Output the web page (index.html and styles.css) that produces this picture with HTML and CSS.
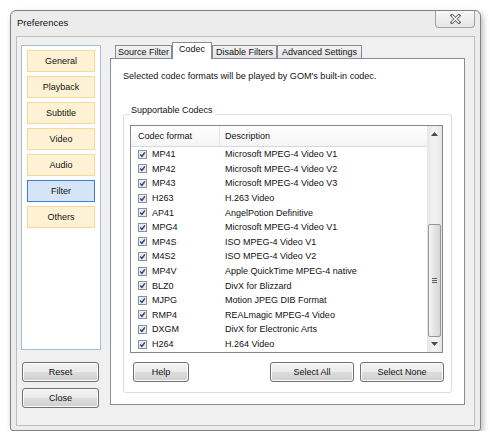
FILE: index.html
```html
<!DOCTYPE html>
<html lang="en">
<head>
    <meta charset="UTF-8">
    <title>Preferences</title>
    <link rel="stylesheet" href="styles.css">
</head>
<body>
    <!-- shared glyphs -->
    <svg class="defs" width="0" height="0">
        <symbol id="chk" viewBox="0 0 9 9">
            <rect x="0.5" y="0.5" width="8" height="8" fill="#f6f6f6" stroke="#8c8f94"/>
            <rect x="1.5" y="1.5" width="6" height="6" fill="#e4e6ea"/>
            <path d="M2.2 4.6 L3.9 6.4 L6.9 2.3" fill="none" stroke="#263f7e" stroke-width="1.4"/>
        </symbol>
    </svg>

    <div class="window">
        <div class="titlebar">
            <span class="title">Preferences</span>
            <div class="close-btn">
                <svg width="11" height="10" viewBox="0 0 11 10">
                    <path d="M2 1.5 L9 8.5 M9 1.5 L2 8.5" stroke="#6d6d6d" stroke-width="3.2" stroke-linecap="square"/>
                    <path d="M2 1.5 L9 8.5 M9 1.5 L2 8.5" stroke="#ffffff" stroke-width="1.3"/>
                </svg>
            </div>
        </div>

        <div class="client">
            <div class="sidebar">
                <div class="nav">
                    <div class="nav-item">General</div>
                    <div class="nav-item">Playback</div>
                    <div class="nav-item">Subtitle</div>
                    <div class="nav-item">Video</div>
                    <div class="nav-item">Audio</div>
                    <div class="nav-item active">Filter</div>
                    <div class="nav-item">Others</div>
                </div>
                <button class="btn side-btn first">Reset</button>
                <button class="btn side-btn">Close</button>
            </div>

            <div class="main">
                <div class="tabs">
                    <div class="tab tab-source">Source Filter</div>
                    <div class="tab tab-codec active">Codec</div>
                    <div class="tab tab-disable">Disable Filters</div>
                    <div class="tab tab-adv">Advanced Settings</div>
                </div>

                <div class="panel">
                    <div class="intro">Selected codec formats will be played by GOM's built-in codec.</div>

                    <div class="group">
                        <span class="group-label">Supportable Codecs</span>

                        <div class="list">
                            <div class="list-body">
                                <div class="list-head">
                                    <span class="col-code">Codec format</span>
                                    <span class="col-desc">Description</span>
                                </div>
                                <div class="row"><span class="col-code"><svg class="chk"><use href="#chk"/></svg>MP41</span><span class="col-desc">Microsoft MPEG-4 Video V1</span></div>
                                <div class="row"><span class="col-code"><svg class="chk"><use href="#chk"/></svg>MP42</span><span class="col-desc">Microsoft MPEG-4 Video V2</span></div>
                                <div class="row"><span class="col-code"><svg class="chk"><use href="#chk"/></svg>MP43</span><span class="col-desc">Microsoft MPEG-4 Video V3</span></div>
                                <div class="row"><span class="col-code"><svg class="chk"><use href="#chk"/></svg>H263</span><span class="col-desc">H.263 Video</span></div>
                                <div class="row"><span class="col-code"><svg class="chk"><use href="#chk"/></svg>AP41</span><span class="col-desc">AngelPotion Definitive</span></div>
                                <div class="row"><span class="col-code"><svg class="chk"><use href="#chk"/></svg>MPG4</span><span class="col-desc">Microsoft MPEG-4 Video V1</span></div>
                                <div class="row"><span class="col-code"><svg class="chk"><use href="#chk"/></svg>MP4S</span><span class="col-desc">ISO MPEG-4 Video V1</span></div>
                                <div class="row"><span class="col-code"><svg class="chk"><use href="#chk"/></svg>M4S2</span><span class="col-desc">ISO MPEG-4 Video V2</span></div>
                                <div class="row"><span class="col-code"><svg class="chk"><use href="#chk"/></svg>MP4V</span><span class="col-desc">Apple QuickTime MPEG-4 native</span></div>
                                <div class="row"><span class="col-code"><svg class="chk"><use href="#chk"/></svg>BLZ0</span><span class="col-desc">DivX for Blizzard</span></div>
                                <div class="row"><span class="col-code"><svg class="chk"><use href="#chk"/></svg>MJPG</span><span class="col-desc">Motion JPEG DIB Format</span></div>
                                <div class="row"><span class="col-code"><svg class="chk"><use href="#chk"/></svg>RMP4</span><span class="col-desc">REALmagic MPEG-4 Video</span></div>
                                <div class="row"><span class="col-code"><svg class="chk"><use href="#chk"/></svg>DXGM</span><span class="col-desc">DivX for Electronic Arts</span></div>
                                <div class="row"><span class="col-code"><svg class="chk"><use href="#chk"/></svg>H264</span><span class="col-desc">H.264 Video</span></div>
                            </div>

                            <div class="scrollbar">
                                <div class="sb-arrow">
                                    <svg width="7" height="4" viewBox="0 0 7 4"><polygon points="3.5,0 7,4 0,4" fill="#4a4a4a"/></svg>
                                </div>
                                <div class="sb-track">
                                    <div class="sb-thumb">
                                        <span class="grip"></span>
                                        <span class="grip"></span>
                                        <span class="grip"></span>
                                    </div>
                                </div>
                                <div class="sb-arrow">
                                    <svg width="7" height="4" viewBox="0 0 7 4"><polygon points="0,0 7,0 3.5,4" fill="#4a4a4a"/></svg>
                                </div>
                            </div>
                        </div>

                        <div class="actions">
                            <button class="btn btn-help">Help</button>
                            <button class="btn btn-sel">Select All</button>
                            <button class="btn btn-sel">Select None</button>
                        </div>
                    </div>
                </div>
            </div>
        </div>
    </div>
</body>
</html>
```

FILE: styles.css
```css
body, html {
    margin: 0;
    padding: 0;
    background: #ffffff;
    font-family: "Liberation Sans", Arial, sans-serif;
    font-size: 9px;
    color: #111111;
}
.defs {
    position: absolute;
    width: 0;
    height: 0;
}

/* window frame */
.window {
    margin: 10px 0 0 10px;
    width: 471px;
    height: 421px;
    box-sizing: border-box;
    border: 1px solid #828282;
    border-radius: 6px 6px 3px 3px;
    background: #ececec;
    box-shadow: 2px 3px 6px rgba(0, 0, 0, 0.28);
    padding: 0 5px 4px 5px;
    display: flex;
    flex-direction: column;
}
.titlebar {
    height: 25px;
    display: flex;
    align-items: flex-start;
    justify-content: space-between;
}
.title {
    padding: 6px 0 0 1px;
    font-size: 9.5px;
    line-height: 12px;
}
.close-btn {
    width: 40px;
    height: 17px;
    box-sizing: border-box;
    border: 1px solid #a3a3a3;
    border-top: none;
    border-radius: 0 0 4px 4px;
    background: linear-gradient(#f7f7f7, #e6e6e6);
    display: flex;
    align-items: center;
    justify-content: center;
}

.client {
    flex: 1;
    border: 1px solid #bdbdbd;
    background: #f0f0f0;
    padding: 5px 0 0 4px;
    display: flex;
}

/* left navigation */
.sidebar {
    width: 80px;
    margin-top: 3px;
    display: flex;
    flex-direction: column;
}
.nav {
    height: 305px;
    box-sizing: border-box;
    border: 1px solid #a9bbd4;
    background: #ffffff;
    padding: 4px 5px;
    display: flex;
    flex-direction: column;
    gap: 4px;
}
.nav-item {
    height: 22px;
    box-sizing: border-box;
    border: 1px solid #f6d99e;
    background: #fff1d4;
    text-align: center;
    line-height: 20px;
}
.nav-item.active {
    background: #d6e4f7;
    border-color: #3d7fd6;
}

/* push buttons */
.btn {
    height: 20px;
    box-sizing: border-box;
    border: 1px solid #717171;
    border-radius: 3px;
    background: linear-gradient(#f3f3f3 0%, #ebebeb 50%, #dddddd 51%, #cfcfcf 100%);
    box-shadow: inset 0 0 0 1px #fbfbfb;
    font-family: "Liberation Sans", Arial, sans-serif;
    font-size: 9px;
    color: #111111;
    padding: 0;
}
.side-btn {
    width: 77px;
    margin: 6px 0 0 1px;
}
.side-btn.first {
    margin-top: 12px;
}

/* tabs + page */
.main {
    margin-left: 9px;
    width: 355px;
    display: flex;
    flex-direction: column;
}
.tabs {
    height: 16px;
    padding-left: 5px;
    display: flex;
    align-items: flex-end;
}
.tab {
    height: 13px;
    box-sizing: border-box;
    border: 1px solid #898c95;
    border-bottom: none;
    background: linear-gradient(#f3f3f3, #e4e4e4);
    text-align: center;
    line-height: 12px;
}
.tab-source { width: 57px; }
.tab-codec { width: 40px; }
.tab-disable { width: 65px; }
.tab-adv { width: 85px; }
.tab.active {
    position: relative;
    z-index: 1;
    height: 17px;
    margin-bottom: -1px;
    background: #ffffff;
    line-height: 13px;
}
.panel {
    height: 347px;
    box-sizing: border-box;
    border: 1px solid #898c95;
    background: #ffffff;
    padding: 11px 12px 12px 12px;
}
.intro {
    font-size: 9.1px;
    line-height: 12px;
}

/* group box */
.group {
    margin-top: 32px;
    height: 279px;
    box-sizing: border-box;
    border: 1px solid #d5dfe5;
    border-radius: 3px;
    padding: 0 7px 10px 6px;
    display: flex;
    flex-direction: column;
}
.group-label {
    align-self: flex-start;
    margin-top: -11px;
    padding: 0 2px 0 1px;
    background: #ffffff;
    line-height: 12px;
}

/* codec list view */
.list {
    margin: 9px 1px 0 0;
    height: 228px;
    box-sizing: border-box;
    border: 1px solid #828790;
    display: flex;
}
.list-body {
    flex: 1;
}
.list-head {
    height: 21px;
    box-sizing: border-box;
    border-bottom: 1px solid #d6d8dc;
    background: linear-gradient(#ffffff, #f4f5f7);
    display: flex;
    line-height: 20px;
}
.list-head .col-code {
    border-right: 1px solid #e3e5e8;
}
.col-code {
    width: 89px;
    box-sizing: border-box;
    padding-left: 7px;
    display: flex;
    align-items: center;
}
.col-desc {
    padding-left: 5px;
}
.row {
    height: 14.6px;
    display: flex;
    align-items: center;
    line-height: 12px;
}
.chk {
    width: 9px;
    height: 9px;
    margin-right: 5px;
}

/* vertical scroll bar */
.scrollbar {
    width: 15px;
    background: linear-gradient(90deg, #e6e6e6, #f2f2f2 40%, #f2f2f2 60%, #e6e6e6);
    display: flex;
    flex-direction: column;
}
.sb-arrow {
    height: 16px;
    display: flex;
    align-items: center;
    justify-content: center;
}
.sb-track {
    flex: 1;
    padding-top: 82px;
}
.sb-thumb {
    height: 113px;
    margin: 0 1px;
    box-sizing: border-box;
    border: 1px solid #979797;
    border-radius: 2px;
    background: linear-gradient(90deg, #f4f4f4, #e4e4e4 50%, #d6d6d6);
    display: flex;
    flex-direction: column;
    align-items: center;
    justify-content: center;
    gap: 1px;
}
.grip {
    width: 5px;
    height: 1px;
    background: #5f5f5f;
}

.actions {
    margin-top: 9px;
    display: flex;
    gap: 6px;
}
.btn-help {
    width: 56px;
    margin-left: 3px;
    margin-right: auto;
}
.btn-sel {
    width: 84px;
}
```
